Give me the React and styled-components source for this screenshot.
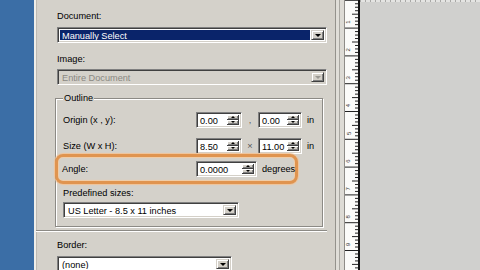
import React from "react";
import styled, { createGlobalStyle, css } from "styled-components";

const Global = createGlobalStyle`
  html, body { margin: 0; padding: 0; background: #d0d0ce; }
  body { width: 480px; height: 270px; overflow: hidden; }
  * { box-sizing: border-box; }
`;

const FONT = `"Liberation Sans", Arial, sans-serif`;

const Screen = styled.div`
  display: flex;
  width: 480px;
  height: 270px;
  overflow: hidden;
  font-family: ${FONT};
  font-size: 9.2px;
  color: #000;
`;

const BlueStrip = styled.div`
  width: 34px;
  flex: none;
  background: #3b6ea6;
`;

const Panel = styled.div`
  width: 302px;
  flex: none;
  background: #d4d1ca;
  border-left: 2px solid #efeee9;
  border-right: 1px solid #94928c;
  box-shadow: inset 1px 0 0 #bdbab3;
  padding: 11px 0 0 21px;
  display: flex;
  flex-direction: column;
  align-items: flex-start;
`;

const Gutter = styled.div`
  width: 8px;
  flex: none;
  background: linear-gradient(to right, #e0ded8 0 3px, #a9a7a1 3px 4px, #dddbd5 4px);
`;

const RulerBox = styled.div`
  width: 16px;
  flex: none;
  background: #fbfbf9;
  border-left: 1px solid #8e8c88;
  border-right: 2px solid #141414;
`;

const Canvas = styled.div`
  flex: 1;
  display: flex;
  flex-direction: column;
  background: #d0d0ce;
`;

const TopRulerEdge = styled.div`
  height: 2px;
  background: repeating-linear-gradient(to right, #a8a8a6 0 1px, #e4e4e2 1px 5px);
`;

const FieldLabel = styled.div`
  height: 11px;
  line-height: 11px;
  margin-top: ${(p) => p.$mt || 0}px;
  margin-bottom: ${(p) => p.$mb || 4}px;
  white-space: nowrap;
`;

const sunken = css`
  border: 1px solid;
  border-color: #808080 #ffffff #ffffff #808080;
  box-shadow: inset 1px 1px 0 #404040, inset -1px -1px 0 #d4d0c8;
`;

const SelectBox = styled.div`
  ${sunken};
  display: flex;
  width: ${(p) => p.$w}px;
  height: 16px;
  flex: none;
  padding: 2px;
  background: ${(p) => (p.$disabled ? "#d4d1ca" : "#ffffff")};
`;

const SelectText = styled.div`
  flex: 1;
  line-height: 12px;
  padding-left: 2px;
  white-space: nowrap;
  overflow: hidden;
  margin-right: 1px;
  color: ${(p) => (p.$disabled ? "#8a8882" : p.$selected ? "#ffffff" : "#000")};
  background: ${(p) => (p.$selected ? "#0a246a" : "transparent")};
`;

const RaisedButton = styled.div`
  width: ${(p) => p.$w || 13}px;
  flex: none;
  background: #d4d0c8;
  border: 1px solid;
  border-color: #d4d0c8 #404040 #404040 #d4d0c8;
  box-shadow: inset 1px 1px 0 #ffffff, inset -1px -1px 0 #808080;
  display: flex;
  align-items: center;
  justify-content: center;
`;

const Arrow = styled.span`
  width: 0;
  height: 0;
  border-left: ${(p) => p.$s}px solid transparent;
  border-right: ${(p) => p.$s}px solid transparent;
  ${(p) =>
    p.$up
      ? `border-bottom: ${p.$s}px solid ${p.$disabled ? "#9a9892" : "#000"};`
      : `border-top: ${p.$s}px solid ${p.$disabled ? "#9a9892" : "#000"};`}
`;

const Select = ({ w, children, selected, disabled }) => (
  <SelectBox $w={w} $disabled={disabled}>
    <SelectText $selected={selected} $disabled={disabled}>
      {children}
    </SelectText>
    <RaisedButton>
      <Arrow $s={3.5} $disabled={disabled} />
    </RaisedButton>
  </SelectBox>
);

const GroupBox = styled.div`
  position: relative;
  width: 268px;
  margin: 13px 0 0 -2px;
  padding: 13px 0 8px 7px;
  border: 1px solid #8c8a85;
  box-shadow: inset 1px 1px 0 #ffffff, 1px 1px 0 #ffffff;
  display: flex;
  flex-direction: column;
  align-items: flex-start;
`;

const Legend = styled.span`
  position: absolute;
  top: -6px;
  left: 7px;
  padding: 0 1px;
  line-height: 11px;
  background: #d4d1ca;
`;

const Row = styled.div`
  display: flex;
  align-items: center;
  height: 16px;
  margin-bottom: ${(p) => p.$mb || 0}px;
`;

const RowLabel = styled.div`
  width: ${(p) => p.$w || 133}px;
  flex: none;
  white-space: nowrap;
`;

const InputBox = styled.div`
  ${sunken};
  display: flex;
  width: ${(p) => p.$w}px;
  height: 16px;
  flex: none;
  background: #ffffff;
  padding: 2px;
`;

const InputText = styled.div`
  flex: 1;
  line-height: 12px;
  padding-left: 1px;
`;

const SpinCol = styled.div`
  width: 12px;
  flex: none;
  display: flex;
  flex-direction: column;
`;

const SpinBtn = styled.div`
  flex: 1;
  background: #d4d0c8;
  border-right: 1px solid #404040;
  border-bottom: 1px solid #404040;
  box-shadow: inset 1px 1px 0 #ffffff, inset -1px -1px 0 #808080;
  display: flex;
  align-items: center;
  justify-content: center;
`;

const SpinInput = ({ w, value }) => (
  <InputBox $w={w}>
    <InputText>{value}</InputText>
    <SpinCol>
      <SpinBtn>
        <Arrow $s={2} $up />
      </SpinBtn>
      <SpinBtn>
        <Arrow $s={2} />
      </SpinBtn>
    </SpinCol>
  </InputBox>
);

const Sep = styled.div`
  width: 16px;
  flex: none;
  text-align: center;
  color: #555;
`;

const Unit = styled.div`
  margin-left: 5px;
  white-space: nowrap;
`;

const Highlight = styled.div`
  display: flex;
  align-items: center;
  width: 243px;
  height: 30px;
  margin: 0 0 0 -8px;
  padding: 0 0 0 4px;
  border: 3px solid #e0944f;
  border-radius: 8px;
  box-shadow: 0 0 1px 1px #f0c49a, inset 0 0 1px 1px #f2cca6;
`;

const Divider = styled.div`
  width: 291px;
  height: 2px;
  margin: 3px 0 0 -21px;
  border-top: 1px solid #8c8a85;
  border-bottom: 1px solid #ffffff;
`;

const Ruler = () => {
  const step = 27.8;
  const sub = step / 8;
  const ticks = [];
  const labels = [];
  for (let i = 0; i < 80; i++) {
    const y = -0.2 + i * sub + 0.5;
    if (y > 272) break;
    const k = i % 8;
    const len = k === 0 ? 13 : k === 4 ? 6 : 3;
    ticks.push(<line key={i} x1={13 - len} y1={y} x2={13} y2={y} stroke="#222" strokeWidth="1" />);
  }
  for (let n = 1; n <= 9; n++) {
    const y = n * step - 4;
    labels.push(
      <text
        key={n}
        x={5.5}
        y={y}
        fontSize="6"
        fontFamily={FONT}
        fill="#333"
        transform={`rotate(-90 5.5 ${y})`}
        textAnchor="start"
      >
        {n}
      </text>
    );
  }
  return (
    <svg width="13" height="270" viewBox="0 0 13 270">
      {ticks}
      {labels}
    </svg>
  );
};

export default function App() {
  return (
    <>
      <Global />
      <Screen>
        <BlueStrip />
        <Panel>
          <FieldLabel $mb={5}>Document:</FieldLabel>
          <Select w={270} selected>
            Manually Select
          </Select>
          <FieldLabel $mt={11}>Image:</FieldLabel>
          <Select w={270} disabled>
            Entire Document
          </Select>
          <GroupBox>
            <Legend>Outline</Legend>
            <Row $mb={10}>
              <RowLabel>Origin (x , y):</RowLabel>
              <SpinInput w={46} value="0.00" />
              <Sep>,</Sep>
              <SpinInput w={44} value="0.00" />
              <Unit>in</Unit>
            </Row>
            <Row>
              <RowLabel>Size (W x H):</RowLabel>
              <SpinInput w={46} value="8.50" />
              <Sep>×</Sep>
              <SpinInput w={44} value="11.00" />
              <Unit>in</Unit>
            </Row>
            <Highlight>
              <RowLabel $w={134}>Angle:</RowLabel>
              <SpinInput w={61} value="0.0000" />
              <Unit>degrees</Unit>
            </Highlight>
            <FieldLabel $mt={4} $mb={3}>Predefined sizes:</FieldLabel>
            <Select w={176}>US Letter - 8.5 x 11 inches</Select>
          </GroupBox>
          <Divider />
          <FieldLabel $mt={8} $mb={5}>Border:</FieldLabel>
          <Select w={175}>(none)</Select>
        </Panel>
        <Gutter />
        <RulerBox>
          <Ruler />
        </RulerBox>
        <Canvas>
          <TopRulerEdge />
        </Canvas>
      </Screen>
    </>
  );
}
